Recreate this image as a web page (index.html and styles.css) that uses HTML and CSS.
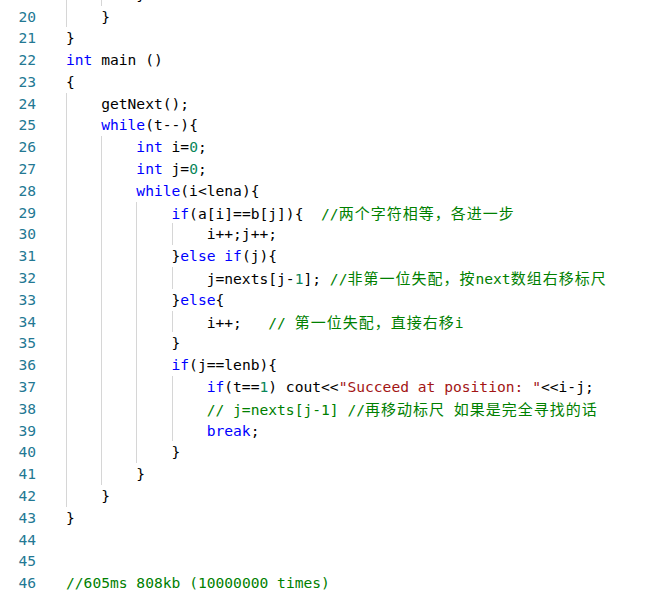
FILE: index.html
```html
<!DOCTYPE html>
<html>
<head>
<meta charset="utf-8">
<link rel="stylesheet" href="styles.css">
</head>
<body>
<div class="editor">
  <div class="ln"><span class="num">19</span><span class="code"><i class="g"></i><i class="g"></i>}</span></div>
  <div class="ln"><span class="num">20</span><span class="code"><i class="g"></i>}</span></div>
  <div class="ln"><span class="num">21</span><span class="code">}</span></div>
  <div class="ln"><span class="num">22</span><span class="code"><b class="k">int</b> main ()</span></div>
  <div class="ln"><span class="num">23</span><span class="code">{</span></div>
  <div class="ln"><span class="num">24</span><span class="code"><i class="g"></i>getNext();</span></div>
  <div class="ln"><span class="num">25</span><span class="code"><i class="g"></i><b class="k">while</b>(t--){</span></div>
  <div class="ln"><span class="num">26</span><span class="code"><i class="g"></i><i class="g"></i><b class="k">int</b> i=<b class="n">0</b>;</span></div>
  <div class="ln"><span class="num">27</span><span class="code"><i class="g"></i><i class="g"></i><b class="k">int</b> j=<b class="n">0</b>;</span></div>
  <div class="ln"><span class="num">28</span><span class="code"><i class="g"></i><i class="g"></i><b class="k">while</b>(i&lt;lena){</span></div>
  <div class="ln"><span class="num">29</span><span class="code"><i class="g"></i><i class="g"></i><i class="g"></i><b class="k">if</b>(a[i]==b[j]){  <b class="c">//<span class="cjk">两个字符相等，各进一步</span></b></span></div>
  <div class="ln"><span class="num">30</span><span class="code"><i class="g"></i><i class="g"></i><i class="g"></i><i class="g"></i>i++;j++;</span></div>
  <div class="ln"><span class="num">31</span><span class="code"><i class="g"></i><i class="g"></i><i class="g"></i>}<b class="k">else</b> <b class="k">if</b>(j){</span></div>
  <div class="ln"><span class="num">32</span><span class="code"><i class="g"></i><i class="g"></i><i class="g"></i><i class="g"></i>j=nexts[j-<b class="n">1</b>]; <b class="c">//<span class="cjk">非第一位失配，按</span>next<span class="cjk">数组右移标尺</span></b></span></div>
  <div class="ln"><span class="num">33</span><span class="code"><i class="g"></i><i class="g"></i><i class="g"></i>}<b class="k">else</b>{</span></div>
  <div class="ln"><span class="num">34</span><span class="code"><i class="g"></i><i class="g"></i><i class="g"></i><i class="g"></i>i++;   <b class="c">// <span class="cjk">第一位失配，直接右移</span>i</b></span></div>
  <div class="ln"><span class="num">35</span><span class="code"><i class="g"></i><i class="g"></i><i class="g"></i>}</span></div>
  <div class="ln"><span class="num">36</span><span class="code"><i class="g"></i><i class="g"></i><i class="g"></i><b class="k">if</b>(j==lenb){</span></div>
  <div class="ln"><span class="num">37</span><span class="code"><i class="g"></i><i class="g"></i><i class="g"></i><i class="g"></i><b class="k">if</b>(t==<b class="n">1</b>) cout&lt;&lt;<b class="s">"Succeed at position: "</b>&lt;&lt;i-j;</span></div>
  <div class="ln"><span class="num">38</span><span class="code"><i class="g"></i><i class="g"></i><i class="g"></i><i class="g"></i><b class="c">// j=nexts[j-1] //<span class="cjk">再移动标尺</span> <span class="cjk">如果是完全寻找的话</span></b></span></div>
  <div class="ln"><span class="num">39</span><span class="code"><i class="g"></i><i class="g"></i><i class="g"></i><i class="g"></i><b class="k">break</b>;</span></div>
  <div class="ln"><span class="num">40</span><span class="code"><i class="g"></i><i class="g"></i><i class="g"></i>}</span></div>
  <div class="ln"><span class="num">41</span><span class="code"><i class="g"></i><i class="g"></i>}</span></div>
  <div class="ln"><span class="num">42</span><span class="code"><i class="g"></i>}</span></div>
  <div class="ln"><span class="num">43</span><span class="code">}</span></div>
  <div class="ln"><span class="num">44</span><span class="code"></span></div>
  <div class="ln"><span class="num">45</span><span class="code"></span></div>
  <div class="ln"><span class="num">46</span><span class="code"><b class="c">//605ms 808kb (10000000 times)</b></span></div>
</div>
</body>
</html>
```

FILE: styles.css
```css
html, body {
  margin: 0;
  padding: 0;
  background: #ffffff;
  overflow: hidden;
}

.editor {
  margin-top: -16.3px;
  font-family: "DejaVu Sans Mono", "Liberation Mono", monospace;
  font-size: 14.62px;
  color: #000000;
}

.ln {
  display: flex;
  height: 21.8px;
  line-height: 21.8px;
  white-space: pre;
}

.num {
  flex: none;
  width: 36px;
  text-align: right;
  color: #237893;
}

.code {
  padding-left: 30px;
  white-space: pre;
}

.g {
  display: inline-block;
  width: 4ch;
  height: 21.8px;
  vertical-align: top;
  box-shadow: inset 1px 0 0 #d6d6d6;
}

b {
  font-weight: normal;
}

.k { color: #0000ff; }
.n { color: #098658; }
.s { color: #a31515; }
.c { color: #008000; }

.cjk {
  font-family: "Noto Sans CJK SC", sans-serif;
  font-size: 15px;
  letter-spacing: 1px;
  line-height: 21.8px;
}
```
